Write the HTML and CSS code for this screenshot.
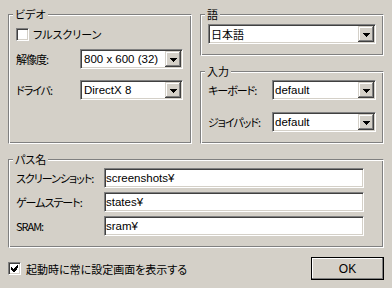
FILE: index.html
```html
<!DOCTYPE html>
<html>
<head>
    <title>設定</title>
    <link rel="stylesheet" href="styles.css">
</head>
<body>
    <div class="dialog">
        <div class="top">
            <div class="group video">
                <span class="group-title">ビデオ</span>
                <div class="check">
                    <span class="box"></span>
                    <span>フルスクリーン</span>
                </div>
                <div class="row first">
                    <span class="label">解像度:</span>
                    <div class="combo wide-pad">
                        <span class="value">800 x 600 (32)</span>
                        <span class="drop"><svg width="7" height="4" viewBox="0 0 7 4"><path d="M0 0h7v1H0zM1 1h5v1H1zM2 2h3v1H2zM3 3h1v1H3z"/></svg></span>
                    </div>
                </div>
                <div class="row second">
                    <span class="label">ドライバ:</span>
                    <div class="combo wide-pad">
                        <span class="value">DirectX 8</span>
                        <span class="drop"><svg width="7" height="4" viewBox="0 0 7 4"><path d="M0 0h7v1H0zM1 1h5v1H1zM2 2h3v1H2zM3 3h1v1H3z"/></svg></span>
                    </div>
                </div>
            </div>
            <div class="side">
                <div class="group lang">
                    <span class="group-title">語</span>
                    <div class="combo">
                        <span class="value jp">日本語</span>
                        <span class="drop"><svg width="7" height="4" viewBox="0 0 7 4"><path d="M0 0h7v1H0zM1 1h5v1H1zM2 2h3v1H2zM3 3h1v1H3z"/></svg></span>
                    </div>
                </div>
                <div class="group input">
                    <span class="group-title">入力</span>
                    <div class="row">
                        <span class="label">キーボード:</span>
                        <div class="combo">
                            <span class="value">default</span>
                            <span class="drop"><svg width="7" height="4" viewBox="0 0 7 4"><path d="M0 0h7v1H0zM1 1h5v1H1zM2 2h3v1H2zM3 3h1v1H3z"/></svg></span>
                        </div>
                    </div>
                    <div class="row second">
                        <span class="label">ジョイパッド:</span>
                        <div class="combo">
                            <span class="value">default</span>
                            <span class="drop"><svg width="7" height="4" viewBox="0 0 7 4"><path d="M0 0h7v1H0zM1 1h5v1H1zM2 2h3v1H2zM3 3h1v1H3z"/></svg></span>
                        </div>
                    </div>
                </div>
            </div>
        </div>
        <div class="group paths">
            <span class="group-title">パス名</span>
            <div class="path-row">
                <span class="label">スクリーンショット:</span>
                <input class="text" type="text" value="screenshots¥" readonly>
            </div>
            <div class="path-row">
                <span class="label">ゲームステート:</span>
                <input class="text" type="text" value="states¥" readonly>
            </div>
            <div class="path-row">
                <span class="label">SRAM:</span>
                <input class="text" type="text" value="sram¥" readonly>
            </div>
        </div>
        <div class="footer">
            <div class="check">
                <span class="box"><svg width="7" height="7" viewBox="0 0 7 7"><path d="M6 0h1v3H6zM5 1h1v4H5zM4 2h1v4H4zM3 3h1v4H3zM2 4h1v3H2zM1 3h1v3H1zM0 2h1v3H0z"/></svg></span>
                <span>起動時に常に設定画面を表示する</span>
            </div>
            <button class="ok" type="button">OK</button>
        </div>
    </div>
</body>
</html>
```

FILE: styles.css
```css
body {
    margin: 0;
    background-color: #d4d0c8;
    font-family: "Noto Sans CJK JP", sans-serif;
    font-size: 11px;
    line-height: 14px;
    color: #000;
}
.dialog {
    width: 392px;
    height: 288px;
    box-sizing: border-box;
    padding: 14px 8px 0 8px;
}
.top {
    display: grid;
    grid-template-columns: 184px 184px;
    column-gap: 8px;
}
.side {
    display: flex;
    flex-direction: column;
    gap: 15px;
}
/* etched group box */
.group {
    position: relative;
    box-sizing: border-box;
    border: 1px solid;
    border-color: #808080 #fff #fff #808080;
    box-shadow: inset 1px 1px #fff, inset -1px -1px #808080;
}
.group-title {
    position: absolute;
    top: -8px;
    left: 4px;
    padding: 0 2px;
    background-color: #d4d0c8;
    font-feature-settings: "palt";
}
.video {
    height: 130px;
    padding: 12px 7px 0;
}
.lang {
    height: 42px;
    padding: 9px 7px 0;
}
.input {
    height: 73px;
    padding: 8px 7px 0;
}
.paths {
    height: 89px;
    margin-top: 15px;
    padding: 8px 7px 0;
    display: flex;
    flex-direction: column;
    gap: 4px;
}
.label {
    flex-shrink: 0;
    font-feature-settings: "palt";
    letter-spacing: -1px;
    white-space: nowrap;
}
.row {
    display: flex;
    align-items: center;
}
.row .label {
    width: 64px;
}
.row.first {
    margin-top: 8px;
}
.row.second {
    margin-top: 11px;
}
.input .row.second {
    margin-top: 12px;
}
.row .combo {
    width: 104px;
}
.video .row .combo {
    width: 103px;
}
.check {
    display: flex;
    align-items: center;
    gap: 4px;
    font-feature-settings: "palt";
}
.box {
    width: 13px;
    height: 13px;
    box-sizing: border-box;
    border: 1px solid;
    border-color: #808080 #fff #fff #808080;
    box-shadow: inset 1px 1px #404040, inset -1px -1px #d4d0c8;
    background-color: #fff;
    display: flex;
    align-items: center;
    justify-content: center;
}
.box svg {
    display: block;
}
.combo {
    display: flex;
    height: 20px;
    box-sizing: border-box;
    padding: 1px;
    border: 1px solid;
    border-color: #808080 #fff #fff #808080;
    box-shadow: inset 1px 1px #404040, inset -1px -1px #d4d0c8;
    background-color: #fff;
}
.value {
    flex: 1;
    padding-left: 1px;
    font-family: "Liberation Sans", "Noto Sans CJK JP", sans-serif;
    font-size: 11.5px;
    line-height: 16px;
    white-space: nowrap;
    overflow: hidden;
}
.wide-pad .value {
    padding-left: 2px;
}
.value.jp {
    font-family: "Noto Sans CJK JP", sans-serif;
    font-size: 11px;
    padding-left: 1px;
}
.drop {
    width: 16px;
    height: 16px;
    background-color: #d4d0c8;
    box-shadow: inset -1px -1px #404040, inset 1px 1px #d4d0c8, inset -2px -2px #808080, inset 2px 2px #fff;
    display: flex;
    align-items: center;
    justify-content: center;
}
.drop svg {
    display: block;
    margin-top: 1px;
}
.path-row {
    display: flex;
    align-items: center;
}
.path-row .label {
    width: 88px;
}
.text {
    width: 260px;
    height: 20px;
    box-sizing: border-box;
    margin: 0;
    padding: 0 1px;
    border: 1px solid;
    border-color: #808080 #fff #fff #808080;
    box-shadow: inset 1px 1px #404040, inset -1px -1px #d4d0c8;
    background-color: #fff;
    font-family: "Liberation Sans", sans-serif;
    font-size: 11.5px;
    color: #000;
    outline: none;
}
.footer {
    display: flex;
    align-items: center;
    justify-content: space-between;
    margin-top: 9px;
}
.footer .check {
    gap: 5px;
}
.ok {
    width: 73px;
    height: 23px;
    margin: 0;
    padding: 0;
    border: 1px solid #000;
    box-shadow: inset -1px -1px #808080, inset 1px 1px #fff;
    background-color: #d4d0c8;
    font-family: "Liberation Sans", sans-serif;
    font-size: 12px;
    color: #000;
}
```
